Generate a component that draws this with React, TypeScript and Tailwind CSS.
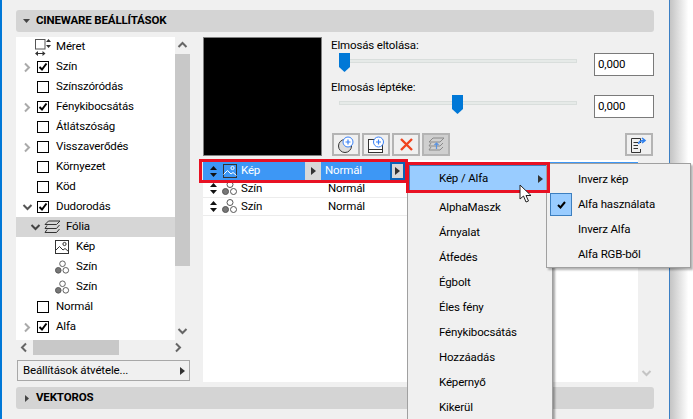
const font = "font-['Roboto',sans-serif] tracking-[-0.15px]";

function Chevron({ dir, className = "" }: { dir: "right" | "down" | "up" | "left"; className?: string }) {
  const d = {
    right: "M3 1.5 7 5.5 3 9.5",
    left: "M7 1.5 3 5.5 7 9.5",
    down: "M1.5 3 5.5 7 9.5 3",
    up: "M1.5 7 5.5 3 9.5 7",
  }[dir];
  return (
    <svg width="11" height="11" viewBox="0 0 11 11" className={className} fill="none" stroke="currentColor" strokeWidth="2">
      <path d={d} />
    </svg>
  );
}

function Tri({ className = "" }: { className?: string }) {
  return (
    <svg width="5" height="8" viewBox="0 0 5 8" className={className} fill="currentColor">
      <path d="M0 0 5 4 0 8Z" />
    </svg>
  );
}

function Check({ on }: { on?: boolean }) {
  return (
    <span className="flex h-[12px] w-[12px] items-center justify-center border border-black bg-white">
      {on && (
        <svg width="10" height="10" viewBox="0 0 10 10" fill="none" stroke="black" strokeWidth="2">
          <path d="M1.5 5 4 7.5 8.5 1.5" />
        </svg>
      )}
    </span>
  );
}

function ImageIcon({ light }: { light?: boolean }) {
  const c = light ? "#fff" : "#333";
  return (
    <svg width="14" height="14" viewBox="0 0 14 14" fill="none" stroke={c} strokeWidth="1">
      <rect x="0.5" y="0.5" width="13" height="13" stroke="#333" fill={light ? "#3d97f5" : "none"} />
      <circle cx="9.5" cy="4" r="1.6" stroke={c} />
      <path d="M0.5 10.5 4.5 6.5 8 10 10 8.5 13.5 11.5" stroke={c} />
    </svg>
  );
}

function ColorIcon() {
  return (
    <svg width="16" height="15" viewBox="0 0 16 15" stroke="#555" strokeWidth="1">
      <circle cx="8" cy="3.5" r="3" fill="#fff" />
      <circle cx="3.5" cy="10.5" r="3" fill="#777" />
      <circle cx="11.5" cy="10.5" r="3" fill="#fff" />
    </svg>
  );
}

function LayersIcon() {
  return (
    <svg width="17" height="14" viewBox="0 0 17 14" fill="none" stroke="#333" strokeWidth="1">
      <path d="M4.5 1 16 1 12.5 4.5 1 4.5Z" />
      <path d="M3 5.5 1 8.5 12.5 8.5 15.5 5" />
      <path d="M3 9.5 1 12.5 12.5 12.5 15.5 9" />
    </svg>
  );
}

function SizeIcon() {
  return (
    <svg width="17" height="17" viewBox="0 0 17 17" fill="none" stroke="#333" strokeWidth="1" className="-ml-[2px]">
      <rect x="0.5" y="0.5" width="9.5" height="9.5" stroke="#555" />
      <path d="M13.5 0 16 3H11ZM11 6H16L13.5 9Z" fill="#333" stroke="none" />
      <path d="M0 14.5 3 12V17ZM10.5 14.5 7.5 12V17Z" fill="#333" stroke="none" />
      <path d="M3 14.5H8" />
    </svg>
  );
}

function Updown() {
  return (
    <svg width="7" height="11" viewBox="0 0 7 11" fill="#111">
      <path d="M3.5 0 7 4H0ZM0 7H7L3.5 11Z" />
    </svg>
  );
}

type TreeRow = {
  label: string;
  indent: number;
  arrow?: "right" | "down";
  check?: boolean;
  icon?: "size" | "layers" | "image" | "color";
  active?: boolean;
};

const treeRows: TreeRow[] = [
  { label: "Méret", indent: 0, icon: "size" },
  { label: "Szín", indent: 0, arrow: "right", check: true },
  { label: "Színszóródás", indent: 0, check: false },
  { label: "Fénykibocsátás", indent: 0, arrow: "right", check: true },
  { label: "Átlátszóság", indent: 0, check: false },
  { label: "Visszaverődés", indent: 0, arrow: "right", check: false },
  { label: "Környezet", indent: 0, check: false },
  { label: "Köd", indent: 0, check: false },
  { label: "Dudorodás", indent: 0, arrow: "down", check: true },
  { label: "Fólia", indent: 1, arrow: "down", icon: "layers", active: true },
  { label: "Kép", indent: 2, icon: "image" },
  { label: "Szín", indent: 2, icon: "color" },
  { label: "Szín", indent: 2, icon: "color" },
  { label: "Normál", indent: 0, check: false },
  { label: "Alfa", indent: 0, arrow: "right", check: true },
];

function Tree() {
  return (
    <div className="h-[303px] w-[159px] overflow-hidden bg-white">
      {treeRows.map((row, i) => (
        <div key={i} className={`relative flex h-[20px] items-center ${row.active ? "bg-[#d6d6d6]" : ""}`}>
          {row.indent === 0 && (
            <>
              <span className="flex w-[21px] justify-center pl-[2px] text-[#aaa]">
                {row.arrow && <Chevron dir={row.arrow} className={row.arrow === "down" ? "text-[#555]" : ""} />}
              </span>
              <span className="flex w-[19px] items-center">
                {row.check !== undefined && <Check on={row.check} />}
                {row.icon === "size" && <SizeIcon />}
              </span>
            </>
          )}
          {row.indent === 1 && (
            <>
              <span className="ml-[14px] flex w-[14px] text-[#444]">
                <Chevron dir="down" />
              </span>
              <span className="mr-[5px] flex w-[17px]">
                <LayersIcon />
              </span>
            </>
          )}
          {row.indent === 2 && (
            <span className="ml-[39px] mr-[6px] flex w-[15px]">
              {row.icon === "image" ? <ImageIcon /> : <ColorIcon />}
            </span>
          )}
          <span className="text-[11.5px] leading-none text-black">{row.label}</span>
        </div>
      ))}
    </div>
  );
}

function Slider({ thumb }: { thumb: "left" | "mid" }) {
  return (
    <div className="relative ml-[8px] h-[20px] w-[238px]">
      <div className="absolute top-[6px] h-[4px] w-full border border-[#d9dedc] bg-[#e6eae8]" />
      <svg
        width="11"
        height="19"
        viewBox="0 0 11 19"
        className={`absolute top-0 ${thumb === "left" ? "left-0" : "left-[113px]"}`}
        fill="#0078d7"
      >
        <path d="M0 0H11V14L5.5 19 0 14Z" />
      </svg>
    </div>
  );
}

function ToolButton({ children, disabled }: { children: React.ReactNode; disabled?: boolean }) {
  return (
    <div
      className={`flex h-[23px] w-[28px] items-center justify-center border-2 border-[#b4b4b4] ${disabled ? "bg-[#cfcfcf]" : "bg-[#f0f0f0]"}`}
    >
      {children}
    </div>
  );
}

function Menu() {
  const items = ["AlphaMaszk", "Árnyalat", "Átfedés", "Égbolt", "Éles fény", "Fénykibocsátás", "Hozzáadás", "Képernyő", "Kikerül"];
  return (
    <div className="absolute left-[407px] top-[163px] h-[270px] w-[146px] border border-[#a0a0a0] bg-[#f0f0f0] p-[1px] shadow-[2px_2px_2px_rgba(0,0,0,0.35)]">
      <div className="flex h-[27px] w-[138px] items-center border border-[#3c7fc0] bg-[#99ccff] pl-[29px] pr-[3px]">
        <span className="flex-1 text-[11.5px] text-black">Kép / Alfa</span>
        <Tri className="text-[#333]" />
      </div>
      <div className="mt-[3px] flex flex-col">
        {items.map((t) => (
          <div key={t} className="flex h-[25px] items-center pl-[30px] text-[11.5px] text-black">
            {t}
          </div>
        ))}
      </div>
    </div>
  );
}

function SubMenu() {
  const items = ["Inverz kép", "Alfa használata", "Inverz Alfa", "Alfa RGB-ből"];
  return (
    <div className="absolute left-[546px] top-[163px] w-[145px] border border-[#a0a0a0] bg-[#f0f0f0] pt-[3px] shadow-[2px_2px_2px_rgba(0,0,0,0.3)]">
      {items.map((t, i) => (
        <div key={t} className="flex h-[25px] items-center text-[11.5px] text-black">
          <span
            className={`ml-[3px] flex h-[23px] w-[22px] items-center justify-center ${i === 1 ? "border border-[#3c7fc0] bg-[#99ccff]" : ""}`}
          >
            {i === 1 && (
              <svg width="9" height="8" viewBox="0 0 9 8" fill="none" stroke="black" strokeWidth="2">
                <path d="M1 4 3.5 6.5 8 1" />
              </svg>
            )}
          </span>
          <span className="ml-[6px]">{t}</span>
        </div>
      ))}
    </div>
  );
}

export default function App() {
  return (
    <div className={`relative flex h-[419px] w-[693px] overflow-hidden bg-white ${font}`}>
      {/* dialog */}
      <div className="flex h-full w-[670px] flex-col border-l-2 border-r border-l-[#0078d7] border-r-[#3b7fc4] bg-[#f0f0f0] pb-[10px] pl-[14px] pr-[15px] pt-[10px]">
        <div className="flex h-[22px] items-center rounded-[3px] bg-[#d4d4d4] pl-[7px]">
          <svg width="7" height="4" viewBox="0 0 7 4" fill="#444">
            <path d="M0 0H7L3.5 4Z" />
          </svg>
          <span className="ml-[6px] text-[11.5px] font-bold text-black">CINEWARE BEÁLLÍTÁSOK</span>
        </div>

        <div className="mt-[5px] flex h-[345px]">
          {/* left column */}
          <div className="flex w-[174px] flex-col">
            <div className="flex">
              <Tree />
              <div className="flex h-[303px] w-[15px] flex-col items-center bg-[#f0f0f0]">
                <div className="flex h-[17px] items-center text-[#666]">
                  <Chevron dir="up" />
                </div>
                <div className="h-[212px] w-full bg-[#c8c8c8]" />
                <div className="mt-auto flex h-[17px] items-center text-[#666]">
                  <Chevron dir="down" />
                </div>
              </div>
            </div>
            <div className="flex h-[15px] w-[174px] items-center text-[#666]">
              <span className="flex w-[17px] justify-center">
                <Chevron dir="left" />
              </span>
              <div className="h-[15px] w-[86px] bg-[#c8c8c8]" />
              <span className="ml-auto flex w-[24px] justify-center">
                <Chevron dir="right" />
              </span>
            </div>
            <div className="ml-[1px] mt-[5px] flex h-[21px] w-[173px] items-center border border-[#a8a8a8] pl-[5px] pr-[4px] text-[11.5px] text-black">
              <span className="flex-1">Beállítások átvétele...</span>
              <Tri className="text-[#333]" />
            </div>
          </div>

          {/* right column */}
          <div className="ml-[13px] flex flex-1 flex-col">
            <div className="flex h-[119px]">
              <div className="h-[119px] w-[119px] border border-[#808080] bg-black" />
              <div className="ml-[9px] flex flex-1 flex-col">
                <div className="flex h-[84px] flex-col">
                  <div className="flex h-[42px]">
                    <div className="w-[263px]">
                      <div className="text-[11.5px] leading-[16px] text-black">Elmosás eltolása:</div>
                      <Slider thumb="left" />
                    </div>
                    <div className="mt-[16px] flex h-[23px] w-[60px] items-center border border-[#7a7a7a] bg-white pl-[3px] text-[11.5px] text-black">
                      0,000
                    </div>
                  </div>
                  <div className="flex h-[42px]">
                    <div className="w-[263px]">
                      <div className="text-[11.5px] leading-[16px] text-black">Elmosás léptéke:</div>
                      <Slider thumb="mid" />
                    </div>
                    <div className="mt-[16px] flex h-[23px] w-[60px] items-center border border-[#7a7a7a] bg-white pl-[3px] text-[11.5px] text-black">
                      0,000
                    </div>
                  </div>
                </div>
                <div className="ml-[1px] mt-[12px] flex gap-[2px]">
                  <ToolButton>
                    <svg width="18" height="18" viewBox="0 0 18 18">
                      <circle cx="8" cy="10" r="6.5" fill="#ddd" stroke="#333" />
                      <circle cx="11" cy="6" r="5" fill="#fff" stroke="#3b82f6" />
                      <path d="M8.5 6H13.5M11 3.5V8.5" stroke="#3b82f6" strokeWidth="1.2" />
                    </svg>
                  </ToolButton>
                  <ToolButton>
                    <svg width="18" height="18" viewBox="0 0 18 18">
                      <rect x="1.5" y="3.5" width="14" height="13" fill="#fff" stroke="#333" />
                      <path d="M1.5 13.5H15.5" stroke="#333" />
                      <circle cx="11.5" cy="6" r="5" fill="#fff" stroke="#3b82f6" />
                      <path d="M9 6H14M11.5 3.5V8.5" stroke="#3b82f6" strokeWidth="1.2" />
                    </svg>
                  </ToolButton>
                  <ToolButton>
                    <svg width="13" height="13" viewBox="0 0 13 13" stroke="#f0441f" strokeWidth="2.4">
                      <path d="M1 1 12 12M12 1 1 12" />
                    </svg>
                  </ToolButton>
                  <ToolButton disabled>
                    <svg width="17" height="15" viewBox="0 0 17 15" fill="none" stroke="#8a8a8a">
                      <path d="M5 1H16L12 5H1ZM3 6 1 9H12L15 6M3 10 1 13H12L15 10" />
                      <path d="M8.5 12V6M6.5 8 8.5 6 10.5 8" stroke="#5a93e0" strokeWidth="1.2" />
                    </svg>
                  </ToolButton>
                  <div className="ml-auto mr-[1px]">
                    <ToolButton>
                      <svg width="18" height="16" viewBox="0 0 18 16" fill="none" stroke="#333">
                        <path d="M10.5 6V1.5H1.5V15.5H10.5V12" />
                        <path d="M3.5 5.5H8M3.5 8.5H8M3.5 11.5H8" />
                        <path d="M8.5 7C9 4 11 3.5 14 3.5M12 1 15 3.5 12 6" stroke="#2f80ed" strokeWidth="1.6" />
                      </svg>
                    </ToolButton>
                  </div>
                </div>
              </div>
            </div>

            {/* layer list */}
            <div className="mt-[4px] flex flex-1">
              <div className="relative flex-1 bg-white pt-[2px]">
                <div className="flex h-[18px] items-center bg-[#3d97f5] text-[11.5px] text-white">
                  <span className="ml-[7px] flex w-[13px]">
                    <Updown />
                  </span>
                  <ImageIcon light />
                  <span className="ml-[4px] w-[64px]">Kép</span>
                  <span className="flex h-[18px] w-[16px] items-center justify-center bg-[#d8d8d8] text-[#333]">
                    <Tri />
                  </span>
                  <span className="ml-[1px] w-[68px] pl-[3px]">Normál</span>
                  <span className="flex h-[18px] w-[15px] items-center justify-center border-2 border-[#0a64b8] bg-[#d8d8d8] text-[#333]">
                    <Tri />
                  </span>
                </div>
                {[0, 1].map((i) => (
                  <div key={i} className="flex h-[18px] items-center border-b border-[#ececec] text-[11.5px] text-black">
                    <span className="ml-[7px] flex w-[12px]">
                      <Updown />
                    </span>
                    <ColorIcon />
                    <span className="ml-[3px] w-[84px]">Szín</span>
                    <span className="pl-[3px]">Normál</span>
                  </div>
                ))}
              </div>
              <div className="flex w-[16px] flex-col items-center justify-end pb-[3px] text-[#c4c4c4]">
                <Chevron dir="down" />
              </div>
            </div>
          </div>
        </div>

        <div className="mt-[5px] flex h-[22px] items-center rounded-[3px] bg-[#d4d4d4] pl-[9px]">
          <svg width="4" height="7" viewBox="0 0 4 7" fill="#444">
            <path d="M0 0 4 3.5 0 7Z" />
          </svg>
          <span className="ml-[7px] text-[11.5px] font-bold text-black">VEKTOROS</span>
        </div>
      </div>
      <div className="h-full w-[23px] bg-gradient-to-r from-[#c4c4c4] to-white to-80%" />

      {/* popup menus over the dialog */}
      <Menu />
      <SubMenu />
      <div className="absolute left-[199px] top-[159px] h-[24px] w-[209px] border-[3px] border-[#e81123]" />
      <div className="absolute left-[406px] top-[162px] h-[31px] w-[144px] border-[3px] border-[#e81123]" />
      <svg width="13" height="20" viewBox="0 0 13 20" className="absolute left-[519px] top-[184px]">
        <path d="M1 1V15L4.5 12 7 18 9.5 17 7 11.5H12Z" fill="#fff" stroke="#222" />
      </svg>
    </div>
  );
}
